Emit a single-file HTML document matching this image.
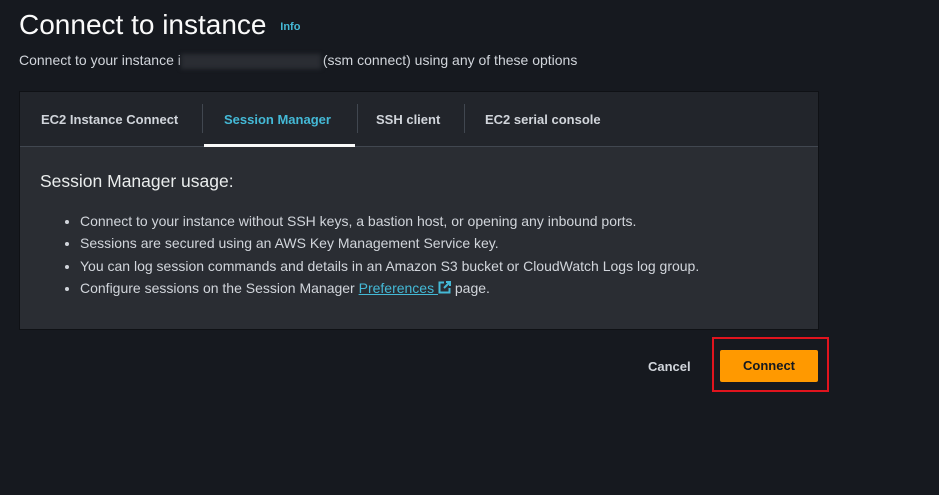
<!DOCTYPE html>
<html><head><style>
*{margin:0;padding:0;box-sizing:border-box}
body{width:939px;height:495px;background:#16191f;font-family:"Liberation Sans",sans-serif;color:#d1d5db;position:relative;overflow:hidden}
.a{position:absolute}
h1{position:absolute;left:19px;top:9px;font-size:28px;font-weight:400;color:#fafafa;white-space:nowrap}
h1 span{font-size:11px;font-weight:700;color:#44b9d6;margin-left:6px;vertical-align:middle}
.sub{left:19px;top:52px;font-size:14px;color:#d1d5db;white-space:nowrap}
.blur{display:inline-block;width:140px;height:15px;background:#2a2d33;vertical-align:middle;filter:blur(2px);margin-right:2px}
.panel{left:19px;top:91px;width:800px;height:239px;background:#2a2d33;border:1px solid #0f1115}
.tabs{left:0;top:0;width:798px;height:55px;background:#22252b;border-bottom:1px solid #414750}
.tab{position:absolute;top:0;height:55px;line-height:55px;font-size:13px;font-weight:700;color:#d1d5db;white-space:nowrap}
.sep{position:absolute;top:12px;width:1px;height:29px;background:#414750}
.body h2{position:absolute;left:20px;top:79px;font-size:17.5px;font-weight:400;color:#eaeded}
ul{position:absolute;left:59px;top:118px;font-size:14px;line-height:22.3px;color:#d1d5db;white-space:nowrap}
a{color:#44b9d6;text-decoration:underline}
.btn{left:720px;top:350px;width:98px;height:32px;background:#ff9900;border-radius:2px;color:#16191f;font-weight:700;font-size:13px;text-align:center;line-height:32px}
.red{left:712px;top:337px;width:117px;height:55px;border:2px solid #e0141e}
.cancel{left:648px;top:359px;font-size:13px;font-weight:700;color:#d1d5db}
</style></head><body>
<h1>Connect to instance <span>Info</span></h1>
<div class="a sub">Connect to your instance i<span class="blur"></span>(ssm connect) using any of these options</div>
<div class="a panel body">
 <div class="a tabs">
  <div class="tab" style="left:21px">EC2 Instance Connect</div>
  <div class="sep" style="left:182px"></div>
  <div class="tab" style="left:204px;color:#44b9d6">Session Manager</div>
  <div class="a" style="left:184px;top:52px;width:151px;height:3px;background:#fafafa"></div>
  <div class="sep" style="left:337px"></div>
  <div class="tab" style="left:356px">SSH client</div>
  <div class="sep" style="left:444px"></div>
  <div class="tab" style="left:465px">EC2 serial console</div>
 </div>
 <h2>Session Manager usage:</h2>
 <ul style="left:40px;padding-left:20px">
  <li>Connect to your instance without SSH keys, a bastion host, or opening any inbound ports.</li>
  <li>Sessions are secured using an AWS Key Management Service key.</li>
  <li>You can log session commands and details in an Amazon S3 bucket or CloudWatch Logs log group.</li>
  <li>Configure sessions on the Session Manager <a>Preferences <svg width="13" height="13" viewBox="0 0 13 13" style="vertical-align:-1px"><path d="M6 1.5H1.5v10h10V7" fill="none" stroke="#44b9d6" stroke-width="2"/><path d="M8 1h4v4M12 1L6 7" fill="none" stroke="#44b9d6" stroke-width="2"/></svg></a> page.</li>
 </ul>
</div>
<div class="a cancel">Cancel</div>
<div class="a red"></div>
<div class="a btn">Connect</div>
</body></html>
